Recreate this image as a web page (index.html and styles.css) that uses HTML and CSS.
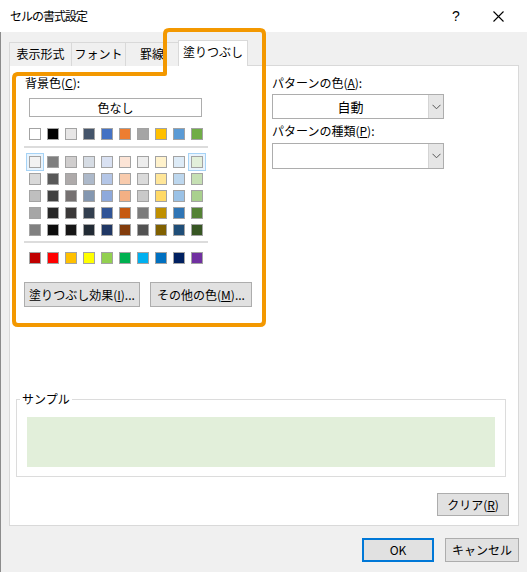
FILE: index.html
```html
<!DOCTYPE html>
<html lang="ja">
<head>
<meta charset="utf-8">
<title>セルの書式設定</title>
<link rel="stylesheet" href="styles.css">
</head>
<body>
<div class="window">
  <div class="titlebar">
    <span class="title">セルの書式設定</span>
    <span class="help">?</span>
    <svg class="close" width="11" height="11" viewBox="0 0 11 11"><path d="M0.5 0.5 L10.5 10.5 M10.5 0.5 L0.5 10.5" stroke="#000" stroke-width="1.1" fill="none"/></svg>
  </div>
  <div class="dlg">
    <div class="tabs">
      <div class="tab t1">表示形式</div>
      <div class="tab t2">フォント</div>
      <div class="tab t3">罫線</div>
      <div class="tab t4 active">塗りつぶし</div>
    </div>
    <div class="panel">
      <div class="cols">
        <div class="left">
          <div class="label lbl-bg">背景色(<u>C</u>):</div>
          <div class="none-btn">色なし</div>
          <div class="grid row-base">
            <span class="sw" style="background:#FFFFFF"></span>
            <span class="sw" style="background:#000000"></span>
            <span class="sw" style="background:#E7E6E6"></span>
            <span class="sw" style="background:#44546A"></span>
            <span class="sw" style="background:#4472C4"></span>
            <span class="sw" style="background:#ED7D31"></span>
            <span class="sw" style="background:#A5A5A5"></span>
            <span class="sw" style="background:#FFC000"></span>
            <span class="sw" style="background:#5B9BD5"></span>
            <span class="sw" style="background:#70AD47"></span>
          </div>
          <div class="sep sep1"></div>
          <div class="grid theme">
            <span class="sw hl" style="background:#F2F2F2"></span>
            <span class="sw" style="background:#7F7F7F"></span>
            <span class="sw" style="background:#D0CECE"></span>
            <span class="sw" style="background:#D6DCE4"></span>
            <span class="sw" style="background:#D9E1F2"></span>
            <span class="sw" style="background:#FCE4D6"></span>
            <span class="sw" style="background:#EDEDED"></span>
            <span class="sw" style="background:#FFF2CC"></span>
            <span class="sw" style="background:#DDEBF7"></span>
            <span class="sw hl" style="background:#E2EFDA"></span>

            <span class="sw" style="background:#D9D9D9"></span>
            <span class="sw" style="background:#595959"></span>
            <span class="sw" style="background:#AEAAAA"></span>
            <span class="sw" style="background:#ADB9CA"></span>
            <span class="sw" style="background:#B4C6E7"></span>
            <span class="sw" style="background:#F8CBAD"></span>
            <span class="sw" style="background:#DBDBDB"></span>
            <span class="sw" style="background:#FFE699"></span>
            <span class="sw" style="background:#BDD7EE"></span>
            <span class="sw" style="background:#C6E0B4"></span>

            <span class="sw" style="background:#BFBFBF"></span>
            <span class="sw" style="background:#404040"></span>
            <span class="sw" style="background:#757171"></span>
            <span class="sw" style="background:#8497B0"></span>
            <span class="sw" style="background:#8EA9DB"></span>
            <span class="sw" style="background:#F4B084"></span>
            <span class="sw" style="background:#C9C9C9"></span>
            <span class="sw" style="background:#FFD966"></span>
            <span class="sw" style="background:#9BC2E6"></span>
            <span class="sw" style="background:#A9D08E"></span>

            <span class="sw" style="background:#A6A6A6"></span>
            <span class="sw" style="background:#262626"></span>
            <span class="sw" style="background:#3A3838"></span>
            <span class="sw" style="background:#333F4F"></span>
            <span class="sw" style="background:#305496"></span>
            <span class="sw" style="background:#C65911"></span>
            <span class="sw" style="background:#7B7B7B"></span>
            <span class="sw" style="background:#BF8F00"></span>
            <span class="sw" style="background:#2F75B5"></span>
            <span class="sw" style="background:#548235"></span>

            <span class="sw" style="background:#808080"></span>
            <span class="sw" style="background:#0D0D0D"></span>
            <span class="sw" style="background:#171616"></span>
            <span class="sw" style="background:#222B35"></span>
            <span class="sw" style="background:#203764"></span>
            <span class="sw" style="background:#833C0C"></span>
            <span class="sw" style="background:#525252"></span>
            <span class="sw" style="background:#806000"></span>
            <span class="sw" style="background:#1F4E78"></span>
            <span class="sw" style="background:#375623"></span>
          </div>
          <div class="sep sep2"></div>
          <div class="grid std">
            <span class="sw" style="background:#C00000"></span>
            <span class="sw" style="background:#FF0000"></span>
            <span class="sw" style="background:#FFC000"></span>
            <span class="sw" style="background:#FFFF00"></span>
            <span class="sw" style="background:#92D050"></span>
            <span class="sw" style="background:#00B050"></span>
            <span class="sw" style="background:#00B0F0"></span>
            <span class="sw" style="background:#0070C0"></span>
            <span class="sw" style="background:#002060"></span>
            <span class="sw" style="background:#7030A0"></span>
          </div>
          <div class="btn-row">
            <button class="btn fx">塗りつぶし効果(<u>I</u>)...</button>
            <button class="btn more">その他の色(<u>M</u>)...</button>
          </div>
        </div>
        <div class="right">
          <div class="label">パターンの色(<u>A</u>):</div>
          <div class="dropdown dd1">
            <span class="dd-text">自動</span>
            <span class="dd-arrow"><svg width="9" height="6" viewBox="0 0 9 6"><path d="M0.5 0.8 L4.5 4.8 L8.5 0.8" stroke="#555" stroke-width="1" fill="none"/></svg></span>
          </div>
          <div class="label lbl2">パターンの種類(<u>P</u>):</div>
          <div class="dropdown dd2">
            <span class="dd-text"></span>
            <span class="dd-arrow"><svg width="9" height="6" viewBox="0 0 9 6"><path d="M0.5 0.8 L4.5 4.8 L8.5 0.8" stroke="#555" stroke-width="1" fill="none"/></svg></span>
          </div>
        </div>
      </div>
      <fieldset class="sample">
        <legend>サンプル</legend>
        <div class="sample-fill"></div>
      </fieldset>
      <div class="clear-row">
        <button class="btn clear">クリア(<u>R</u>)</button>
      </div>
    </div>
    <div class="footer">
      <button class="btn ok">OK</button>
      <button class="btn cancel">キャンセル</button>
    </div>
  </div>
  <svg class="callout" width="527" height="572" viewBox="0 0 527 572">
    <path d="M17 74 L165 74 L165 34 Q165 30 169 30 L260 30 Q264 30 264 34 L264 321 Q264 325 260 325 L18 325 Q14 325 14 321 L14 78 Q14 74 18 74 Z" fill="none" stroke="#f39800" stroke-width="4" stroke-linejoin="round"/>
  </svg>
</div>
</body>
</html>
```

FILE: styles.css
```css
* { box-sizing: border-box; }

html, body {
  margin: 0;
  padding: 0;
}

body {
  width: 527px;
  height: 572px;
  overflow: hidden;
  background: #f0f0f0;
  font-family: "Noto Sans CJK JP", "Noto Sans", sans-serif;
  font-size: 12px;
  color: #000;
}

.window {
  position: relative;
  width: 527px;
  height: 572px;
}

.titlebar {
  height: 32px;
  background: #fff;
  display: flex;
  align-items: center;
  padding-left: 10px;
  padding-right: 23px;
}

.title {
  font-size: 12px;
  letter-spacing: -1px;
  line-height: 16px;
}

.help {
  margin-left: auto;
  width: 14px;
  text-align: center;
  font-family: "Liberation Sans", sans-serif;
  font-size: 14px;
  line-height: 16px;
  margin-right: 30px;
}

.close {
  display: block;
}

.dlg {
  height: 540px;
  border-left: 1px solid #8c8c8c;
  padding: 8px 8px 0 8px;
}

.tabs {
  display: flex;
  align-items: flex-end;
  height: 26px;
  margin-bottom: -1px;
}

.tab {
  height: 24px;
  border: 1px solid #d9d9d9;
  border-bottom: none;
  background: #f0f0f0;
  display: flex;
  align-items: center;
  justify-content: center;
  padding-bottom: 2px;
  margin-right: -1px;
  line-height: 16px;
}

.t1 { width: 63px; }
.t2 { width: 55px; }
.t3 { width: 54px; }

.tab.active {
  position: relative;
  z-index: 1;
  width: 70px;
  height: 26px;
  background: #fff;
  padding-bottom: 3px;
}

.panel {
  width: 510px;
  height: 461px;
  border: 1px solid #d9d9d9;
  background: #fff;
  padding-top: 9px;
}

.cols {
  display: flex;
  align-items: flex-start;
}

.left {
  margin-left: 14px;
  width: 228px;
}

.right {
  margin-left: 20px;
  width: 172px;
}

.label {
  line-height: 16px;
  height: 16px;
  white-space: nowrap;
}

.lbl-bg { margin-left: 1px; }

.none-btn {
  margin: 7px 0 0 5px;
  width: 173px;
  height: 19px;
  border: 1px solid #adadad;
  background: #fff;
  text-align: center;
  line-height: 17px;
}

.grid {
  display: grid;
  grid-template-columns: repeat(10, 12px);
  column-gap: 6px;
  row-gap: 5px;
  margin-left: 5px;
}

.row-base { margin-top: 11px; }
.theme { margin-top: 8px; }
.std { margin-top: 9px; }

.sw {
  display: block;
  width: 12px;
  height: 12px;
  border: 1px solid #a3a3a3;
}

.sw.hl {
  box-shadow: 0 0 0 2px #e9f4fd, 0 0 0 3px #a6d3f6;
}

.sep {
  width: 184px;
  height: 2px;
  background: #dcdcdc;
}

.sep1 { margin-top: 6px; }
.sep2 { margin-top: 5px; }

.btn-row {
  display: flex;
  gap: 10px;
  margin-top: 18px;
}

.btn {
  font-family: inherit;
  font-size: 12px;
  color: #000;
  background: #e1e1e1;
  border: 1px solid #adadad;
  padding: 0;
  margin: 0;
  line-height: 16px;
  white-space: nowrap;
}

.fx { width: 116px; height: 25px; }
.more { width: 102px; height: 25px; }

.dropdown {
  display: flex;
  width: 172px;
  border: 1px solid #adadad;
  background: #fff;
}

.dd1 { margin-top: 3px; height: 25px; }
.dd2 { margin-top: 4px; height: 26px; }
.lbl2 { margin-top: 4px; }

.dd-text {
  flex: 1;
  text-align: center;
  align-self: center;
  line-height: 16px;
  font-size: 13px;
}

.dd-arrow {
  width: 15px;
  background: #e6e6e6;
  border-left: 1px solid #d4d4d4;
  display: flex;
  align-items: center;
  justify-content: center;
}

.dd-arrow svg { display: block; }

.sample {
  margin: 84px 0 0 6px;
  width: 490px;
  border: 1px solid #dcdcdc;
  padding: 10px 10px 9px 3px;
  min-width: 0;
}

.sample legend {
  padding: 0 2px;
  line-height: 16px;
  font-size: 12px;
}

.sample-fill {
  margin-left: 7px;
  width: 468px;
  height: 50px;
  background: #e2efda;
}

.clear-row {
  display: flex;
  justify-content: flex-end;
  margin-top: 16px;
  padding-right: 9px;
}

.clear { width: 72px; height: 23px; }

.footer {
  display: flex;
  justify-content: flex-end;
  gap: 11px;
  margin-top: 12px;
}

.ok {
  width: 72px;
  height: 24px;
  border: 2px solid #0078d7;
}

.cancel {
  width: 74px;
  height: 24px;
}

u { text-decoration-thickness: 1px; text-underline-offset: 1px; }

.callout {
  position: absolute;
  left: 0;
  top: 0;
  pointer-events: none;
}
```
